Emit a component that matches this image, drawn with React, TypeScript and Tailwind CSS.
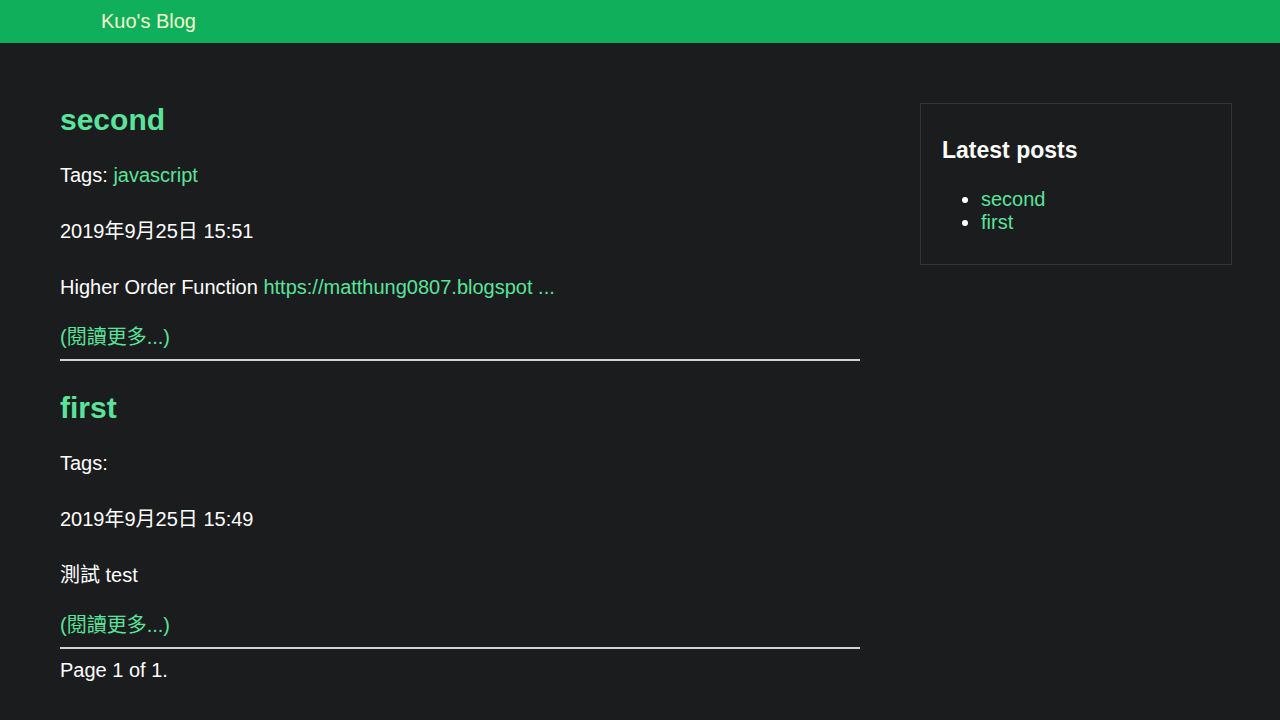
import React from 'react';

const posts = [
  {
    title: 'second',
    tags: ['javascript'],
    date: '2019年9月25日 15:51',
    body: (
      <>
        Higher Order Function{' '}
        <a href="#" className="text-[#5ae39a]">https://matthung0807.blogspot ...</a>
      </>
    ),
  },
  {
    title: 'first',
    tags: [] as string[],
    date: '2019年9月25日 15:49',
    body: <>測試 test</>,
  },
];

const font = { fontFamily: '"Liberation Sans", Arial, "Noto Sans CJK TC", sans-serif' };

export default function App() {
  return (
    <div className="min-h-[720px] bg-[#1b1c1e] text-white text-[20px]" style={font}>
      <header className="h-[43px] bg-[#10af5b] flex items-center pl-[101px] pb-[2px]">
        <span className="text-[20px] text-[#f4f8cf] leading-none">Kuo's Blog</span>
      </header>

      <div className="flex pl-[60px] pt-[59px] gap-[60px]">
        <main className="w-[800px]">
          {posts.map((post) => (
            <article key={post.title} className="mb-[29px]">
              <h2 className="text-[30px] font-bold leading-[36px] text-[#5ae39a]">
                <a href="#">{post.title}</a>
              </h2>
              <p className="mt-[19px] leading-[36px]">
                Tags:{' '}
                {post.tags.map((tag) => (
                  <a key={tag} href="#" className="text-[#5ae39a]">{tag}</a>
                ))}
              </p>
              <p className="mt-[20px] leading-[36px]">{post.date}</p>
              <p className="mt-[20px] leading-[36px]">{post.body}</p>
              <p className="mt-[14px] leading-[36px]">
                <a href="#" className="text-[#5ae39a]">(閱讀更多...)</a>
              </p>
              <hr className="mt-[4px] border-0 border-t-2 border-[#d4d4d4]" />
            </article>
          ))}
          <p className="-mt-[20px] leading-[24px]">Page 1 of 1.</p>
        </main>

        <aside className="mt-[1px] w-[312px] h-[162px] border border-[#343538] px-[21px] pt-[32px]">
          <h3 className="text-[23px] font-bold leading-[28px]">Latest posts</h3>
          <ul className="mt-[24px] list-disc pl-[39px] leading-[23px]">
            <li><a href="#" className="text-[#5ae39a]">second</a></li>
            <li><a href="#" className="text-[#5ae39a]">first</a></li>
          </ul>
        </aside>
      </div>
    </div>
  );
}
